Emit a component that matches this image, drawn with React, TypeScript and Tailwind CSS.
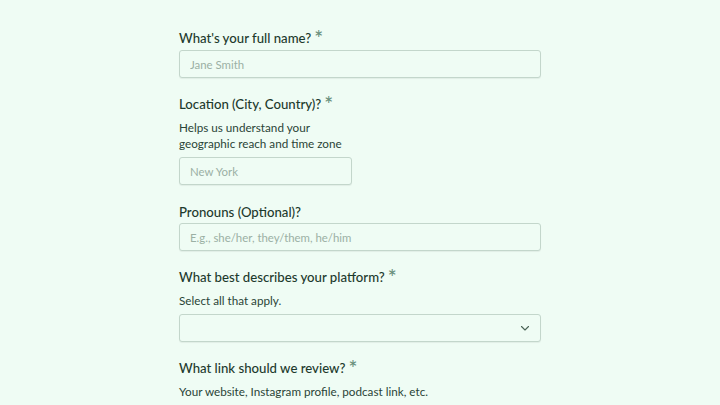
import React from 'react';

const Star = () => (
  <span className="relative top-[3px] ml-[3px] text-[21px] leading-[0] text-[#6a907d]">*</span>
);

const Label: React.FC<{ text: string; required?: boolean }> = ({ text, required }) => (
  <div className="h-5 text-[13.2px] leading-5 font-medium text-[#1d3a2d]">
    {text}
    {required && <Star />}
  </div>
);

const Help: React.FC<{ children: React.ReactNode; className?: string }> = ({ children, className }) => (
  <p className={`mt-[5px] text-[11.7px] leading-4 text-[#2a4437] ${className ?? ''}`}>{children}</p>
);

const inputCls =
  'h-7 rounded-[3px] border border-[#c3d6cb] bg-[#effcf4] px-[10px] text-[11.4px] text-[#2a4437] placeholder:text-[#9bb0a4] outline-none shadow-[0_1px_1px_rgba(0,0,0,0.06)]';

export default function App() {
  return (
    <div className="min-h-[405px] w-full bg-[#effcf4] font-['Lato',sans-serif] overflow-hidden">
      <form className="mx-auto flex w-[362px] flex-col pt-[28px]" onSubmit={(e) => e.preventDefault()}>
        <Label text="What's your full name?" required />
        <input className={`${inputCls} mt-[2px] w-full`} placeholder="Jane Smith" />

        <div className="mt-[16px]">
          <Label text="Location (City, Country)?" required />
        </div>
        <Help className="w-[170px]">Helps us understand your geographic reach and time zone</Help>
        <input className={`${inputCls} mt-[6px] w-[173px]`} placeholder="New York" />

        <div className="mt-[17px]">
          <Label text="Pronouns (Optional)?" />
        </div>
        <input className={`${inputCls} mt-[1px] w-full`} placeholder="E.g., she/her, they/them, he/him" />

        <div className="mt-[16px]">
          <Label text="What best describes your platform?" required />
        </div>
        <Help>Select all that apply.</Help>
        <div className={`${inputCls} mt-[6px] flex w-full items-center justify-end pr-[9px]`}>
          <svg width="12" height="12" viewBox="0 0 24 24" fill="none" stroke="#4a6356" strokeWidth="2.2" strokeLinecap="round" strokeLinejoin="round">
            <path d="M5 9l7 7 7-7" />
          </svg>
        </div>

        <div className="mt-[16px]">
          <Label text="What link should we review?" required />
        </div>
        <Help>Your website, Instagram profile, podcast link, etc.</Help>
      </form>
    </div>
  );
}
